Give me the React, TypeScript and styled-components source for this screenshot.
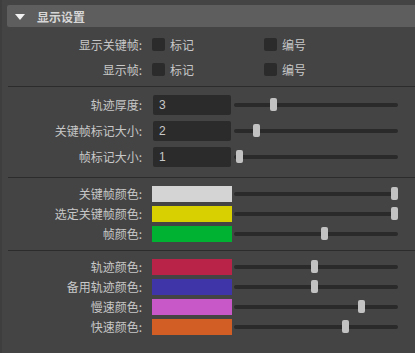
import React from "react";
import styled, { createGlobalStyle } from "styled-components";

const GlobalStyle = createGlobalStyle`
  html, body {
    margin: 0;
    padding: 0;
    background: #444444;
  }
  body {
    font-family: "Noto Sans CJK SC", "Liberation Sans", sans-serif;
    font-size: 12px;
    color: #c8c8c8;
  }
`;

const checkRows = [{ label: "显示关键帧:" }, { label: "显示帧:" }];

const sliderRows = [
  { label: "轨迹厚度:", value: "3", pos: 0.229 },
  { label: "关键帧标记大小:", value: "2", pos: 0.121 },
  { label: "帧标记大小:", value: "1", pos: 0.013 },
];

const frameColors = [
  { label: "关键帧颜色:", color: "#d4d4d4", pos: 1 },
  { label: "选定关键帧颜色:", color: "#d8d000", pos: 1 },
  { label: "帧颜色:", color: "#00b232", pos: 0.554 },
];

const trackColors = [
  { label: "轨迹颜色:", color: "#b92347", pos: 0.49 },
  { label: "备用轨迹颜色:", color: "#3f35a8", pos: 0.49 },
  { label: "慢速颜色:", color: "#c858c8", pos: 0.79 },
  { label: "快速颜色:", color: "#d35e25", pos: 0.688 },
];

export default function App() {
  return (
    <Panel>
      <GlobalStyle />
      <Header>
        <Triangle />
        <Title>显示设置</Title>
      </Header>

      <Group $top={5} $bottom={4}>
        {checkRows.map((r) => (
          <Row key={r.label} $h={25}>
            <Label>{r.label}</Label>
            <Option>
              <Box />
              <span>标记</span>
            </Option>
            <Option>
              <Box />
              <span>编号</span>
            </Option>
          </Row>
        ))}
      </Group>
      <Divider />

      <Group $top={5} $bottom={7}>
        {sliderRows.map((r) => (
          <Row key={r.label} $h={26}>
            <Label>{r.label}</Label>
            <NumberBox>{r.value}</NumberBox>
            <Slider pos={r.pos} />
          </Row>
        ))}
      </Group>
      <Divider />

      <Group $top={6} $bottom={6}>
        {frameColors.map((r) => (
          <Row key={r.label} $h={20}>
            <Label>{r.label}</Label>
            <Swatch $color={r.color} />
            <Slider pos={r.pos} />
          </Row>
        ))}
      </Group>
      <Divider />

      <Group $top={6} $bottom={6}>
        {trackColors.map((r) => (
          <Row key={r.label} $h={20}>
            <Label>{r.label}</Label>
            <Swatch $color={r.color} />
            <Slider pos={r.pos} />
          </Row>
        ))}
      </Group>
    </Panel>
  );
}

const Slider = ({ pos }: { pos: number }) => {
  return (
    <Track>
      <Thumb style={{ left: Math.round(pos * 157) }} />
    </Track>
  );
};

const Panel = styled.div`
  height: 353px;
  box-sizing: border-box;
  padding-top: 5px;
  padding-left: 5px;
  border-left: 2px solid #3e3e3e;
  overflow: hidden;
`;

const Header = styled.div`
  display: flex;
  align-items: center;
  height: 22px;
  background: #5e5e5e;
  border-radius: 2px 0 0 2px;
  padding-left: 8px;
`;

const Triangle = styled.div`
  width: 0;
  height: 0;
  border-left: 5.5px solid transparent;
  border-right: 5.5px solid transparent;
  border-top: 6px solid #f2f2f2;
  margin-top: 1px;
`;

const Title = styled.span`
  margin-left: 12px;
  font-weight: bold;
  color: #d6d6d6;
  font-size: 12px;
`;

const Group = styled.div<{ $top: number; $bottom: number }>`
  padding-top: ${(p) => p.$top}px;
  padding-bottom: ${(p) => p.$bottom}px;
`;

const Divider = styled.div`
  margin-left: 1px;
  height: 1px;
  background: #2c2c2c;
`;

const Row = styled.div<{ $h: number }>`
  display: flex;
  align-items: center;
  height: ${(p) => p.$h}px;
`;

const Label = styled.div`
  width: 135px;
  text-align: right;
  margin-right: 10px;
  white-space: nowrap;
  line-height: 1;
`;

const Option = styled.div`
  display: flex;
  align-items: center;
  width: 112px;
  gap: 5px;
  line-height: 1;
`;

const Box = styled.div`
  width: 13px;
  height: 13px;
  border-radius: 2px;
  background: #2b2b2b;
`;

const NumberBox = styled.div`
  width: 78px;
  height: 20px;
  margin-left: 1px;
  margin-right: 1px;
  box-sizing: border-box;
  padding-left: 6px;
  background: #2b2b2b;
  border-radius: 2px;
  display: flex;
  align-items: center;
  color: #c8c8c8;
  font-family: "Liberation Sans", "Noto Sans CJK SC", sans-serif;
  font-size: 12px;
`;

const Swatch = styled.div<{ $color: string }>`
  width: 80px;
  height: 16px;
  background: ${(p) => p.$color};
`;

const Track = styled.div`
  position: relative;
  margin-left: 2px;
  width: 164px;
  height: 4px;
  border-radius: 2px;
  background: #2a2a2a;
`;

const Thumb = styled.div`
  position: absolute;
  top: -5px;
  width: 7px;
  height: 13px;
  border-radius: 2px;
  background: #c2c2c2;
`;
